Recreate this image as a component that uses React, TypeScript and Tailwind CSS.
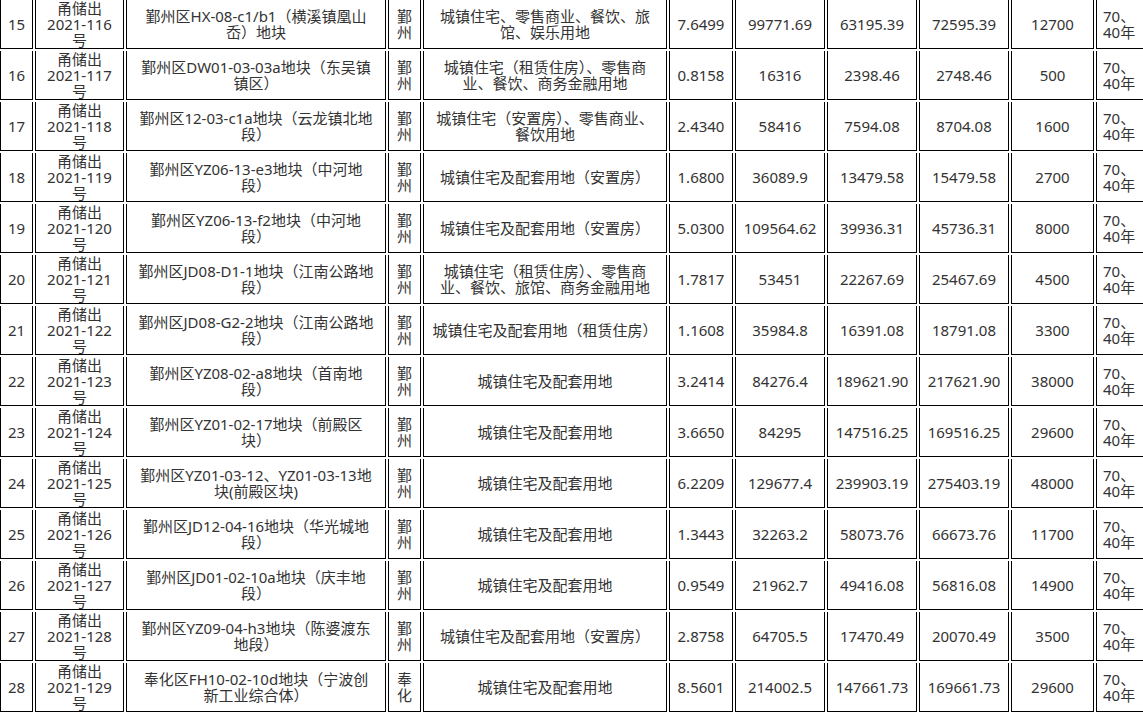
import React from "react";

type Row = {
  no: string;
  code: string;
  name: string[];
  dist: string[];
  use: string[];
  area: string;
  a: string;
  b: string;
  c: string;
  d: string;
};

const rows: Row[] = [
  { no: "15", code: "116", name: ["鄞州区HX-08-c1/b1（横溪镇凰山", "岙）地块"], dist: ["鄞", "州"], use: ["城镇住宅、零售商业、餐饮、旅", "馆、娱乐用地"], area: "7.6499", a: "99771.69", b: "63195.39", c: "72595.39", d: "12700" },
  { no: "16", code: "117", name: ["鄞州区DW01-03-03a地块（东吴镇", "镇区）"], dist: ["鄞", "州"], use: ["城镇住宅（租赁住房）、零售商", "业、餐饮、商务金融用地"], area: "0.8158", a: "16316", b: "2398.46", c: "2748.46", d: "500" },
  { no: "17", code: "118", name: ["鄞州区12-03-c1a地块（云龙镇北地", "段）"], dist: ["鄞", "州"], use: ["城镇住宅（安置房）、零售商业、", "餐饮用地"], area: "2.4340", a: "58416", b: "7594.08", c: "8704.08", d: "1600" },
  { no: "18", code: "119", name: ["鄞州区YZ06-13-e3地块（中河地", "段）"], dist: ["鄞", "州"], use: ["城镇住宅及配套用地（安置房）"], area: "1.6800", a: "36089.9", b: "13479.58", c: "15479.58", d: "2700" },
  { no: "19", code: "120", name: ["鄞州区YZ06-13-f2地块（中河地", "段）"], dist: ["鄞", "州"], use: ["城镇住宅及配套用地（安置房）"], area: "5.0300", a: "109564.62", b: "39936.31", c: "45736.31", d: "8000" },
  { no: "20", code: "121", name: ["鄞州区JD08-D1-1地块（江南公路地", "段）"], dist: ["鄞", "州"], use: ["城镇住宅（租赁住房）、零售商", "业、餐饮、旅馆、商务金融用地"], area: "1.7817", a: "53451", b: "22267.69", c: "25467.69", d: "4500" },
  { no: "21", code: "122", name: ["鄞州区JD08-G2-2地块（江南公路地", "段）"], dist: ["鄞", "州"], use: ["城镇住宅及配套用地（租赁住房）"], area: "1.1608", a: "35984.8", b: "16391.08", c: "18791.08", d: "3300" },
  { no: "22", code: "123", name: ["鄞州区YZ08-02-a8地块（首南地", "段）"], dist: ["鄞", "州"], use: ["城镇住宅及配套用地"], area: "3.2414", a: "84276.4", b: "189621.90", c: "217621.90", d: "38000" },
  { no: "23", code: "124", name: ["鄞州区YZ01-02-17地块（前殿区", "块）"], dist: ["鄞", "州"], use: ["城镇住宅及配套用地"], area: "3.6650", a: "84295", b: "147516.25", c: "169516.25", d: "29600" },
  { no: "24", code: "125", name: ["鄞州区YZ01-03-12、YZ01-03-13地", "块(前殿区块)"], dist: ["鄞", "州"], use: ["城镇住宅及配套用地"], area: "6.2209", a: "129677.4", b: "239903.19", c: "275403.19", d: "48000" },
  { no: "25", code: "126", name: ["鄞州区JD12-04-16地块（华光城地", "段）"], dist: ["鄞", "州"], use: ["城镇住宅及配套用地"], area: "1.3443", a: "32263.2", b: "58073.76", c: "66673.76", d: "11700" },
  { no: "26", code: "127", name: ["鄞州区JD01-02-10a地块（庆丰地", "段）"], dist: ["鄞", "州"], use: ["城镇住宅及配套用地"], area: "0.9549", a: "21962.7", b: "49416.08", c: "56816.08", d: "14900" },
  { no: "27", code: "128", name: ["鄞州区YZ09-04-h3地块（陈婆渡东", "地段）"], dist: ["鄞", "州"], use: ["城镇住宅及配套用地（安置房）"], area: "2.8758", a: "64705.5", b: "17470.49", c: "20070.49", d: "3500" },
  { no: "28", code: "129", name: ["奉化区FH10-02-10d地块（宁波创", "新工业综合体）"], dist: ["奉", "化"], use: ["城镇住宅及配套用地"], area: "8.5601", a: "214002.5", b: "147661.73", c: "169661.73", d: "29600" },
];

function Lines({ lines }: { lines: string[] }) {
  return (
    <>
      {lines.map((l, i) => (
        <React.Fragment key={i}>
          {i > 0 && <br />}
          {l}
        </React.Fragment>
      ))}
    </>
  );
}

const td =
  "border-l border-r border-b border-black p-0 align-middle text-center whitespace-nowrap h-[49px] leading-[16.5px]";

export default function App() {
  return (
    <div className="w-[1143px] h-[713px] overflow-hidden bg-white">
      <table className="table-fixed border-separate border-spacing-x-[2px] border-spacing-y-[2px] w-[1160px] -mt-[2px] -ml-[2px] text-[15px] text-[#333] font-['Noto_Sans','Noto_Sans_CJK_SC',sans-serif]">
        <colgroup>
          <col className="w-[33px]" />
          <col className="w-[89px]" />
          <col className="w-[260px]" />
          <col className="w-[33px]" />
          <col className="w-[244px]" />
          <col className="w-[64px]" />
          <col className="w-[90px]" />
          <col className="w-[90px]" />
          <col className="w-[90px]" />
          <col className="w-[83px]" />
          <col className="w-[60px]" />
        </colgroup>
        <tbody>
          {rows.map((r) => (
            <tr key={r.no}>
              <td className={td}>{r.no}</td>
              <td className={`${td} leading-[16px]`}>
                甬储出
                <br />
                2021-{r.code}
                <br />号
              </td>
              <td className={td}>
                <Lines lines={r.name} />
              </td>
              <td className={td}>
                <Lines lines={r.dist} />
              </td>
              <td className={td}>
                <Lines lines={r.use} />
              </td>
              <td className={td}>{r.area}</td>
              <td className={td}>{r.a}</td>
              <td className={td}>{r.b}</td>
              <td className={td}>{r.c}</td>
              <td className={td}>{r.d}</td>
              <td className={`${td} text-left pl-[6px]`}>
                70、
                <br />
                40年
              </td>
            </tr>
          ))}
        </tbody>
      </table>
    </div>
  );
}
